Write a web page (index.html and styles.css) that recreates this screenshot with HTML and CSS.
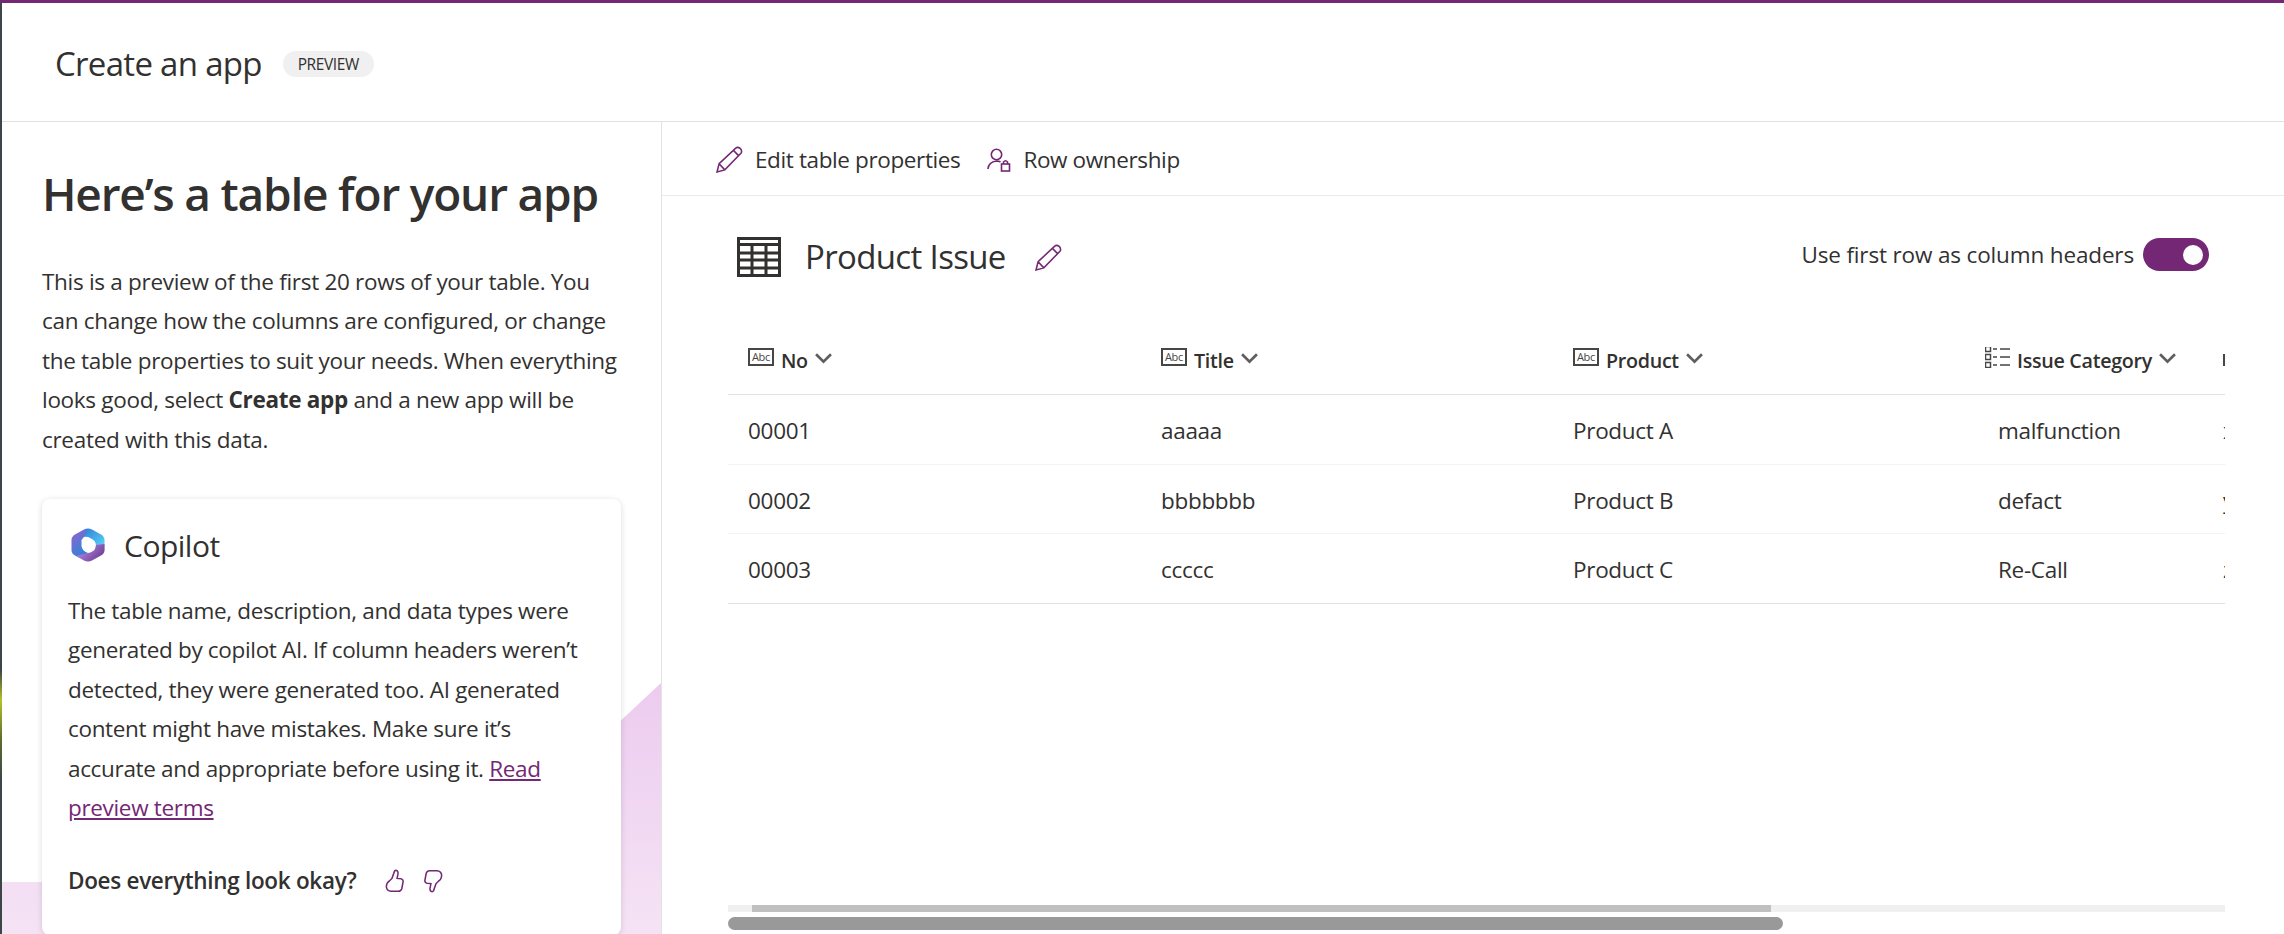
FILE: index.html
```html
<!DOCTYPE html>
<html lang="en">
<head>
    <meta charset="UTF-8">
    <title>Create an app</title>
    <link rel="stylesheet" href="styles.css">
</head>
<body>
    <div class="app">
        <header class="top-bar">
            <h2 class="app-title">Create an app</h2>
            <span class="pill">PREVIEW</span>
        </header>

        <div class="main">
            <aside class="side">
                <div class="side-art"></div>
                <h1 class="side-title">Here’s a table for your app</h1>
                <p class="side-text">This is a preview of the first 20 rows of your table. You can change how the columns are configured, or change the table properties to suit your needs. When everything looks good, select <b>Create app</b> and a new app will be created with this data.</p>

                <section class="card">
                    <div class="card-head">
                        <svg class="copilot" viewBox="0 0 36 36">
                            <defs>
                                <linearGradient id="cpBlue" x1="0" y1="0" x2="1" y2="1">
                                    <stop offset="0" stop-color="#2f78d8"/>
                                    <stop offset="1" stop-color="#5fe0f8"/>
                                </linearGradient>
                                <linearGradient id="cpLeft" x1="0" y1="0" x2="0.6" y2="1">
                                    <stop offset="0" stop-color="#9a5fd0"/>
                                    <stop offset="1" stop-color="#2c86d6"/>
                                </linearGradient>
                                <linearGradient id="cpPink" x1="0" y1="0" x2="1" y2="0.6">
                                    <stop offset="0" stop-color="#c79af0"/>
                                    <stop offset="1" stop-color="#6f3f98"/>
                                </linearGradient>
                            </defs>
                            <path fill="url(#cpBlue)" d="M14 2.500 Q18 0.500 22 2.500 L31 7.500 Q34.500 9.500 34.500 13 L34.500 24 L26 19 Q26 14 22 12 L18 10 Q14 9 12 11 Z"/>
                            <path fill="url(#cpLeft)" d="M14 2.500 L5 7.500 Q1.500 9.500 1.500 13 L1.500 23 Q1.500 26.500 5 28.500 L9 30.500 L18 26 Q12 24 11.500 19 L11.500 13 L17 6 Z"/>
                            <path fill="url(#cpPink)" d="M34.500 17 L34.500 23 Q34.500 26.500 31 28.500 L22 33.500 Q18 35.500 14 33.500 L6 29 L14 27 L18 26 Q23 25 25 22 L26 18 Z"/>
                        </svg>
                        <span class="card-title">Copilot</span>
                    </div>
                    <p class="card-text">The table name, description, and data types were generated by copilot AI. If column headers weren’t detected, they were generated too. AI generated content might have mistakes. Make sure it’s accurate and appropriate before using it. <a href="#">Read preview terms</a></p>
                    <div class="feedback">
                        <b>Does everything look okay?</b>
                        <svg class="thumb" viewBox="0 0 24 28"><path d="M9 11 L12 2.500 Q13 1 15 2 Q16.500 3 16 6 L15 11 L20 11.500 Q22.500 12.500 22 15 L20.500 23 Q19.500 26 16.500 26 L8 26 Q3 25.500 2.500 21 Q2.500 16 6 14 Z"/></svg>
                        <svg class="thumb" viewBox="0 0 24 28"><path d="M15 17 L12 25.500 Q11 27 9 26 Q7.500 25 8 22 L9 17 L4 16.500 Q1.500 15.500 2 13 L3.500 5 Q4.500 2 7.500 2 L16 2 Q21 2.500 21.500 7 Q21.500 12 18 14 Z"/></svg>
                    </div>
                </section>
            </aside>

            <section class="content">
                <div class="toolbar">
                    <button class="tool">
                        <svg class="pencil" viewBox="0 0 26 26"><path d="M1 25 L3 17 L19 2 Q21 0.500 23.500 2.500 Q25.500 5 24 7 L8.500 23 Z M17 4.500 L21.500 9 M3 17 L8.500 23"/></svg>
                        Edit table properties
                    </button>
                    <button class="tool">
                        <svg class="owner" viewBox="0 0 24 24"><circle cx="9.500" cy="6.500" r="5.200"/><path d="M1 21 Q1.500 14 9.500 13 Q12 13 13.500 14"/><rect x="14.500" y="16" width="8" height="7"/><path d="M16.500 16 L16.500 14 Q18.500 11.500 20.500 14 L20.500 16"/></svg>
                        Row ownership
                    </button>
                </div>

                <div class="table-wrap">
                    <div class="table-head">
                        <svg class="table-icon" viewBox="0 0 44 40">
                            <rect x="1.500" y="1.500" width="41" height="37"/>
                            <path d="M1 7.500 H43 M1 16 H43 M1 23 H43 M1 31 H43 M15 8 V39 M29 8 V39"/>
                        </svg>
                        <span class="table-name">Product Issue</span>
                        <svg class="pencil pencil-name" viewBox="0 0 26 26"><path d="M1 25 L3 17 L19 2 Q21 0.500 23.500 2.500 Q25.500 5 24 7 L8.500 23 Z M17 4.500 L21.500 9 M3 17 L8.500 23"/></svg>
                        <div class="header-switch">
                            <span>Use first row as column headers</span>
                            <span class="toggle"><i></i></span>
                        </div>
                    </div>

                    <div class="grid">
                        <div class="row row-head">
                            <div class="cell"><span class="abc">Abc</span><span class="col-name">No</span><svg class="chev" viewBox="0 0 16 10"><path d="M1 1 L8 8 L15 1"/></svg></div>
                            <div class="cell"><span class="abc">Abc</span><span class="col-name">Title</span><svg class="chev" viewBox="0 0 16 10"><path d="M1 1 L8 8 L15 1"/></svg></div>
                            <div class="cell"><span class="abc">Abc</span><span class="col-name">Product</span><svg class="chev" viewBox="0 0 16 10"><path d="M1 1 L8 8 L15 1"/></svg></div>
                            <div class="cell">
                                <svg class="list-icon" viewBox="0 0 25 22"><rect x="0.500" y="0.500" width="5" height="5"/><rect x="0.500" y="8.500" width="5" height="5"/><rect x="0.500" y="16.500" width="5" height="5"/><path d="M8 3 H12 M15 3 H25 M8 11 H12 M15 11 H25 M8 19 H12 M15 19 H25"/></svg>
                                <span class="col-name">Issue Category</span><svg class="chev" viewBox="0 0 16 10"><path d="M1 1 L8 8 L15 1"/></svg>
                            </div>
                            <div class="cell"><span class="abc">Abc</span></div>
                        </div>
                        <div class="row">
                            <div class="cell">00001</div><div class="cell">aaaaa</div><div class="cell">Product A</div><div class="cell cell-choice">malfunction</div><div class="cell">xxxxx</div>
                        </div>
                        <div class="row">
                            <div class="cell">00002</div><div class="cell">bbbbbbb</div><div class="cell">Product B</div><div class="cell cell-choice">defact</div><div class="cell">yyyyy</div>
                        </div>
                        <div class="row row-last">
                            <div class="cell">00003</div><div class="cell">ccccc</div><div class="cell">Product C</div><div class="cell cell-choice">Re-Call</div><div class="cell">zzzzz</div>
                        </div>
                    </div>

                    <div class="scrollers">
                        <div class="track"><div class="track-thumb"></div></div>
                        <div class="outer-thumb"></div>
                    </div>
                </div>
            </section>
        </div>
    </div>
</body>
</html>
```

FILE: styles.css
```css
* {
    margin: 0;
    padding: 0;
    box-sizing: border-box;
}
body {
    width: 2284px;
    height: 934px;
    overflow: hidden;
    border-top: 3px solid #742774;
    padding-left: 2px;
    background: linear-gradient(#3b4648 0, #3b4648 670px, #b3c22a 700px, #5e6b30 740px, #3b4648 780px);
    color: #323130;
    font-family: 'Open Sans', 'Noto Sans', sans-serif;
}
.app {
    height: 931px;
    display: flex;
    flex-direction: column;
    background: #fff;
}

/* top header */
.top-bar {
    height: 119px;
    flex: none;
    display: flex;
    align-items: center;
    padding: 3px 0 0 53px;
    gap: 21px;
    border-bottom: 1px solid #e1e1e1;
}
.app-title {
    font-size: 33px;
    font-weight: 500;
    letter-spacing: -0.7px;
}
.pill {
    width: 91px;
    height: 26px;
    border-radius: 13px;
    background: #f0f0f0;
    font-size: 15.500px;
    font-weight: 500;
    line-height: 26px;
    text-align: center;
    letter-spacing: -0.4px;
}

.main {
    flex: 1;
    display: flex;
    min-height: 0;
}

/* left panel */
.side {
    position: relative;
    width: 660px;
    flex: none;
    padding: 0 40px;
    border-right: 1px solid #e3e3e3;
    overflow: hidden;
}
.side-art {
    position: absolute;
    inset: 0;
    background: linear-gradient(#eccbef 560px, #f5e3f5 100%);
    clip-path: polygon(100% 561px, 446px 760px, 0 760px, 0 100%, 100% 100%);
}
.side-title {
    position: relative;
    margin-top: 40px;
    font-size: 46px;
    line-height: 62px;
    font-weight: 600;
    letter-spacing: -1.2px;
}
.side-text {
    position: relative;
    margin-top: 38px;
    font-size: 22.500px;
    line-height: 39.400px;
    letter-spacing: -0.3px;
    width: 578px;
}
.card {
    position: relative;
    width: 579px;
    height: 436px;
    margin-top: 40px;
    padding: 25px 26px;
    background: #fff;
    border-radius: 8px;
    box-shadow: 0 1px 6px rgba(0, 0, 0, 0.14);
}
.card-head {
    display: flex;
    align-items: center;
    height: 42px;
    gap: 18px;
}
.copilot {
    width: 36px;
    height: 36px;
    margin-left: 2px;
}
.card-title {
    font-size: 30px;
    font-weight: 500;
    letter-spacing: -0.5px;
}
.card-text {
    margin-top: 25px;
    font-size: 22.500px;
    line-height: 39.400px;
    letter-spacing: -0.33px;
}
.card-text a {
    color: #742774;
}
.feedback {
    display: flex;
    align-items: center;
    margin-top: 38px;
    font-size: 22.500px;
    letter-spacing: -0.3px;
}
.feedback b {
    font-weight: 600;
    margin-right: 28px;
}
.thumb {
    width: 21px;
    height: 24px;
    margin-right: 18px;
    fill: none;
    stroke: #742774;
    stroke-width: 1.800;
}

/* right panel */
.content {
    flex: 1;
    display: flex;
    flex-direction: column;
    min-width: 0;
}
.toolbar {
    height: 74px;
    flex: none;
    display: flex;
    align-items: center;
    padding: 2px 0 0 54px;
    gap: 27px;
    border-bottom: 1px solid #eaeaea;
}
.tool {
    display: flex;
    align-items: center;
    gap: 12px;
    border: none;
    background: none;
    color: #323130;
    font-family: inherit;
    font-size: 22.500px;
    letter-spacing: -0.38px;
}
.pencil {
    width: 27px;
    height: 27px;
    fill: none;
    stroke: #742774;
    stroke-width: 1.500;
}
.owner {
    width: 24px;
    height: 24px;
    fill: none;
    stroke: #742774;
    stroke-width: 1.600;
}
.table-wrap {
    flex: 1;
    display: flex;
    flex-direction: column;
    min-height: 0;
    margin: 0 59px 0 66px;
}
.table-head {
    height: 122px;
    flex: none;
    display: flex;
    align-items: center;
    padding-left: 9px;
}
.table-icon {
    width: 44px;
    height: 40px;
    fill: none;
    stroke: #323130;
    stroke-width: 3;
}
.table-name {
    margin: -2px 0 0 24px;
    font-size: 33px;
    font-weight: 500;
    letter-spacing: -0.65px;
}
.pencil-name {
    margin-left: 29px;
}
.header-switch {
    margin: -5px 16px 0 auto;
    display: flex;
    align-items: center;
    gap: 9px;
    font-size: 22.500px;
    letter-spacing: -0.15px;
}
.toggle {
    width: 66px;
    height: 33px;
    border-radius: 17px;
    background: #742774;
    display: flex;
    align-items: center;
    justify-content: flex-end;
    padding-right: 6px;
}
.toggle i {
    width: 20px;
    height: 20px;
    border-radius: 50%;
    background: #fff;
}

/* table */
.grid {
    flex: none;
    overflow: hidden;
}
.row {
    display: grid;
    grid-template-columns: 413px 412px 412px 238px 22px;
    height: 69.500px;
    align-items: center;
    padding-top: 3px;
    border-bottom: 1px solid #f3f3f3;
    font-size: 22.500px;
    letter-spacing: -0.3px;
}
.row-head {
    height: 77px;
    padding-top: 8px;
    border-bottom-color: #e1e1e1;
    font-size: 19.700px;
}
.row-last {
    border-bottom-color: #e1e1e1;
}
.cell {
    display: flex;
    align-items: center;
    padding-left: 20px;
    white-space: nowrap;
    overflow: hidden;
}
.cell-choice {
    padding-left: 33px;
}
.abc {
    width: 26px;
    height: 18px;
    flex: none;
    margin-top: -6px;
    border: 2px solid #484644;
    color: #484644;
    font-size: 11px;
    line-height: 14px;
    text-align: center;
    letter-spacing: -0.3px;
}
.list-icon {
    width: 25px;
    height: 22px;
    flex: none;
    margin-top: -6px;
    fill: none;
    stroke: #484644;
    stroke-width: 1.500;
}
.col-name {
    margin-left: 7px;
    font-weight: 600;
}
.chev {
    width: 17px;
    height: 11px;
    margin-left: 7px;
    margin-top: -4px;
    fill: none;
    stroke: #605e5c;
    stroke-width: 2.500;
}

/* scrollbars */
.scrollers {
    margin-top: auto;
    padding-bottom: 4px;
}
.track {
    height: 7px;
    background: #f0f0f0;
    padding-left: 24px;
}
.track-thumb {
    width: 1019px;
    height: 7px;
    background: #c0c0c0;
}
.outer-thumb {
    width: 1055px;
    height: 13px;
    margin-top: 5px;
    border-radius: 7px;
    background: #999;
}
```
